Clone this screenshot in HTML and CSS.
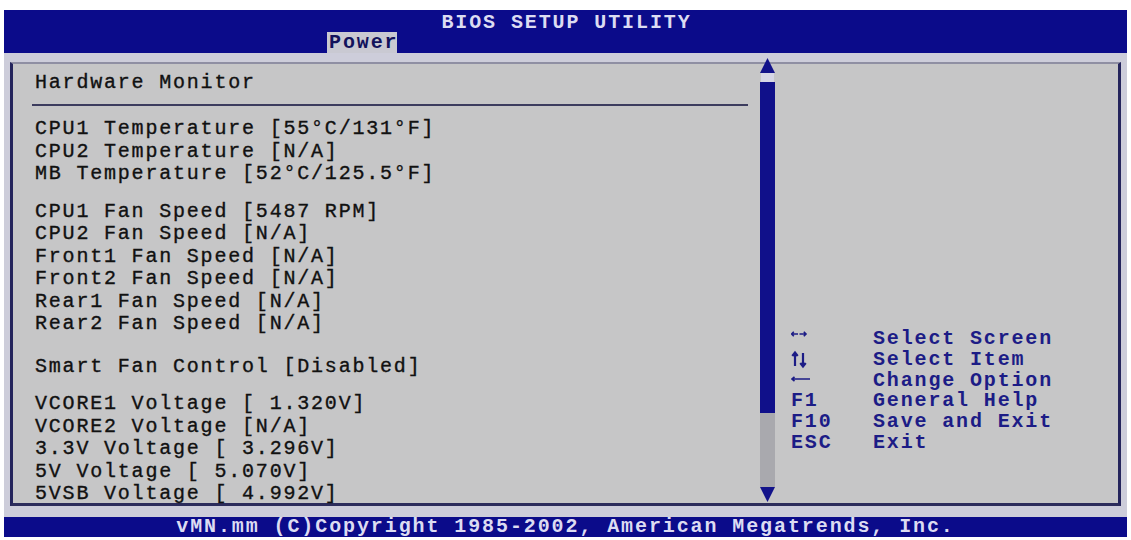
FILE: index.html
```html
<!DOCTYPE html>
<html>
<head>
<meta charset="utf-8">
<title>BIOS SETUP UTILITY</title>
<link rel="stylesheet" href="styles.css">
</head>
<body>
<div class="bios">
  <header class="topbar">
    <div class="title">BIOS SETUP UTILITY</div>
    <div class="tabs"><span class="tab active">Power</span></div>
  </header>
  <div class="frame">
    <div class="panel">
      <section class="main">
        <div class="heading">Hardware Monitor</div>
        <div class="rule"></div>
        <div class="group first">
          <div class="line">CPU1 Temperature [55°C/131°F]</div>
          <div class="line">CPU2 Temperature [N/A]</div>
          <div class="line">MB Temperature [52°C/125.5°F]</div>
        </div>
        <div class="group">
          <div class="line">CPU1 Fan Speed [5487 RPM]</div>
          <div class="line">CPU2 Fan Speed [N/A]</div>
          <div class="line">Front1 Fan Speed [N/A]</div>
          <div class="line">Front2 Fan Speed [N/A]</div>
          <div class="line">Rear1 Fan Speed [N/A]</div>
          <div class="line">Rear2 Fan Speed [N/A]</div>
        </div>
        <div class="group wide">
          <div class="line">Smart Fan Control [Disabled]</div>
        </div>
        <div class="group">
          <div class="line">VCORE1 Voltage [ 1.320V]</div>
          <div class="line">VCORE2 Voltage [N/A]</div>
          <div class="line">3.3V Voltage [ 3.296V]</div>
          <div class="line">5V Voltage [ 5.070V]</div>
          <div class="line">5VSB Voltage [ 4.992V]</div>
        </div>
      </section>
      <div class="scrollbar">
        <svg class="arrow" width="15" height="15" viewBox="0 0 15 15"><polygon points="7.5,0 15,15 0,15"/></svg>
        <div class="gap"></div>
        <div class="thumb"></div>
        <div class="track"></div>
        <svg class="arrow" width="15" height="15" viewBox="0 0 15 15"><polygon points="0,0 15,0 7.5,15"/></svg>
      </div>
      <aside class="help">
        <div class="keys">
          <div class="key"><svg width="18" height="20" viewBox="0 0 18 20"><g fill="none" stroke="#1c1c86" stroke-width="1.6"><path d="M0.5 5 H7 M2.8 2.8 L0.6 5 L2.8 7.2"/><path d="M8.5 5 H15 M12.8 2.8 L15 5 L12.8 7.2"/></g></svg></div>
          <div class="desc">Select Screen</div>
          <div class="key"><svg width="18" height="20" viewBox="0 0 18 20"><g fill="none" stroke="#1c1c86" stroke-width="2.2"><path d="M4 3 V16 M1.3 6 L4 2.5 L6.7 6"/><path d="M12 3 V16 M9.3 13 L12 16.5 L14.7 13"/></g></svg></div>
          <div class="desc">Select Item</div>
          <div class="key"><svg width="20" height="20" viewBox="0 0 20 20"><g fill="none" stroke="#1c1c86" stroke-width="1.6"><path d="M1 8 H19 M3.5 5.8 L1 8 L3.5 10.2"/></g></svg></div>
          <div class="desc">Change Option</div>
          <div class="key">F1</div>
          <div class="desc">General Help</div>
          <div class="key">F10</div>
          <div class="desc">Save and Exit</div>
          <div class="key">ESC</div>
          <div class="desc">Exit</div>
        </div>
      </aside>
    </div>
  </div>
  <footer class="bottombar">vMN.mm (C)Copyright 1985-2002, American Megatrends, Inc.</footer>
</div>
</body>
</html>
```

FILE: styles.css
```css
* { box-sizing: border-box; }

html, body {
  margin: 0;
  padding: 0;
  background: #ffffff;
}

.bios {
  width: 1123px;
  margin: 10px 0 0 4px;
  font-family: "Liberation Mono", "DejaVu Sans Mono", monospace;
}

.topbar {
  height: 43px;
  background: #0b0b8a;
  display: flex;
  flex-direction: column;
}

.title {
  height: 22px;
  padding-top: 3px;
  padding-left: 2px;
  line-height: 19px;
  font-size: 20px;
  font-weight: bold;
  letter-spacing: 1.9px;
  color: #dcdcf2;
  text-align: center;
}

.tabs {
  height: 21px;
  display: flex;
  padding-left: 323px;
}

.tab {
  display: block;
  width: 70px;
  height: 21px;
  padding-left: 2px;
  line-height: 21px;
  font-size: 20px;
  font-weight: bold;
  letter-spacing: 1.9px;
  color: #12125c;
}

.tab.active {
  background: #c9c9d2;
}

.frame {
  background: #cdcdda;
  padding: 9px 6px 11px 6px;
}

.panel {
  height: 444px;
  display: flex;
  background: #c6c6c7;
  border-top: 2px solid #8f8fa3;
  border-left: 3px solid #24245c;
  border-right: 3px solid #24245c;
  border-bottom: 3px solid #2c2c5c;
}

.main {
  width: 747px;
  flex: none;
  padding: 8px 0 0 22px;
  font-size: 20px;
  letter-spacing: 1.8px;
  color: #111111;
  -webkit-text-stroke: 0.35px #111111;
}

.heading {
  line-height: 22px;
  height: 22px;
  white-space: pre;
}

.rule {
  height: 2px;
  margin: 10px 12px 0 -3px;
  background: #3c3c5e;
}

.group {
  margin-top: 15px;
}

.group.first {
  margin-top: 12px;
}

.group.wide {
  margin-top: 20px;
}

.line {
  line-height: 22.5px;
  height: 22.5px;
  white-space: pre;
}

.scrollbar {
  width: 15px;
  flex: none;
  margin-top: -6px;
  align-self: flex-start;
  display: flex;
  flex-direction: column;
}

.scrollbar .arrow {
  display: block;
  fill: #12128a;
}

.scrollbar .gap {
  height: 9px;
  background: #d6d6e6;
  margin: 0 1px;
}

.scrollbar .thumb {
  height: 331px;
  background: #10108a;
}

.scrollbar .track {
  height: 74px;
  background: #a9a9ae;
}

.help {
  flex: 1;
  padding: 265px 0 0 16px;
}

.keys {
  display: grid;
  grid-template-columns: 82px 1fr;
  font-size: 20px;
  font-weight: bold;
  letter-spacing: 1.85px;
  color: #1c1c86;
}

.key, .desc {
  height: 20.8px;
  line-height: 20.8px;
  white-space: pre;
}

.key svg {
  display: block;
}

.bottombar {
  height: 20px;
  line-height: 20px;
  background: #0b0b8a;
  color: #dcdcf2;
  font-size: 20px;
  font-weight: bold;
  letter-spacing: 1.9px;
  text-align: center;
  white-space: pre;
}
```
